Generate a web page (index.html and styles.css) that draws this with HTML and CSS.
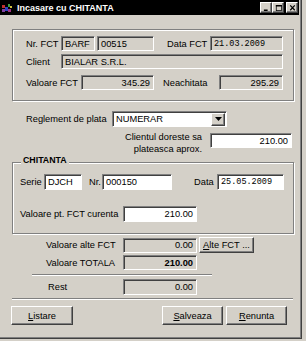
FILE: index.html
```html
<!DOCTYPE html>
<html>
<head>
<meta charset="utf-8">
<link rel="stylesheet" href="styles.css">
</head>
<body>
<div class="win">
  <div class="titlebar">
    <svg class="appicon" width="11" height="10" viewBox="0 0 11 10">
      <rect x="0" y="2" width="3" height="3" fill="#c03030"/>
      <rect x="3" y="4" width="3" height="4" fill="#3040c0"/>
      <rect x="0" y="6" width="3" height="3" fill="#8040a0"/>
      <rect x="6" y="1" width="2" height="3" fill="#40a040"/>
      <rect x="8" y="3" width="2" height="2" fill="#d0c040"/>
      <rect x="6" y="6" width="3" height="3" fill="#a03080"/>
    </svg>
    <span class="title">Incasare cu CHITANTA</span>
    <div class="ctrls">
      <span class="cb"><svg width="9" height="8" viewBox="0 0 9 8"><rect x="1" y="6" width="5" height="2" fill="#000"/></svg></span>
      <span class="cb"><svg width="9" height="8" viewBox="0 0 9 8"><rect x="1.5" y="0.5" width="7" height="7" fill="none" stroke="#000"/><rect x="1" y="0" width="8" height="2" fill="#000"/></svg></span>
      <span class="cb cb-close"><svg width="9" height="8" viewBox="0 0 9 8"><path d="M1.5 0.5 L7.5 7 M7.5 0.5 L1.5 7" stroke="#000" stroke-width="1.6"/></svg></span>
    </div>
  </div>
  <div class="content">
    <div class="grp grp-fct">
      <div class="row row1">
        <span class="lbl l-nr">Nr. FCT</span>
        <span class="fld f-serie">BARF</span>
        <span class="fld f-nr">00515</span>
        <span class="lbl l-data">Data FCT</span>
        <span class="fld f-data mono">21.03.2009</span>
      </div>
      <div class="row row2">
        <span class="lbl l-nr">Client</span>
        <span class="fld f-client">BIALAR S.R.L.</span>
      </div>
      <div class="row row3">
        <span class="lbl l-val">Valoare FCT</span>
        <span class="fld r f-val">345.29</span>
        <span class="lbl l-neach">Neachitata</span>
        <span class="fld r f-neach">295.29</span>
      </div>
    </div>

    <div class="row row-regl">
      <span class="lbl l-regl">Reglement de plata</span>
      <div class="select">
        <span class="sel-text">NUMERAR</span>
        <span class="sel-btn"><svg width="7" height="4" viewBox="0 0 7 4"><path d="M0 0 H7 L3.5 4 Z" fill="#000"/></svg></span>
      </div>
    </div>

    <div class="row row-aprox">
      <span class="lbl-aprox">Clientul doreste sa<br>plateasca aprox.</span>
      <span class="fld white r f-aprox">210.00</span>
    </div>

    <div class="grp grp-chit">
      <span class="grp-title">CHITANTA</span>
      <div class="row row-serie">
        <span class="lbl l-serie">Serie</span>
        <span class="fld white f-dj">DJCH</span>
        <span class="lbl l-nr2">Nr.</span>
        <span class="fld white f-nr2">000150</span>
        <span class="lbl l-data2">Data</span>
        <span class="fld white mono f-data2">25.05.2009</span>
      </div>
      <div class="row row-vpt">
        <span class="lbl l-vpt">Valoare pt. FCT curenta</span>
        <span class="fld white r f-sum">210.00</span>
      </div>
    </div>

    <div class="row row-alte">
      <span class="lbl-sum">Valoare alte FCT</span>
      <span class="fld r f-sum">0.00</span>
      <span class="btn btn-alte"><u>A</u>lte FCT ...</span>
    </div>
    <div class="row row-tot">
      <span class="lbl-sum">Valoare TOTALA</span>
      <span class="fld r f-sum bold">210.00</span>
    </div>
    <div class="sep sep-short"></div>
    <div class="row row-rest">
      <span class="lbl-sum l-rest">Rest</span>
      <span class="fld r f-sum">0.00</span>
    </div>
    <div class="sep sep-full"></div>
    <div class="row row-btns">
      <span class="btn btn-listare"><u>L</u>istare</span>
      <span class="btn btn-salv"><u>S</u>alveaza</span>
      <span class="btn btn-ren"><u>R</u>enunta</span>
    </div>
  </div>
</div>
</body>
</html>
```

FILE: styles.css
```css
html, body {
  margin: 0;
  padding: 0;
}
body {
  background: #d4d0c8;
  font-family: "Liberation Sans", Arial, sans-serif;
  font-size: 9.3px;
  color: #000;
}
.win {
  width: 301px;
  height: 338px;
  background: #d4d0c8;
  border-right: 1px solid #404040;
  border-bottom: 1px solid #404040;
  box-shadow: inset -1px -1px 0 #808080;
  position: relative;
}
.titlebar {
  height: 15px;
  margin-right: 2px;
  background: #000;
  color: #fff;
  display: flex;
  align-items: center;
  font-weight: bold;
  font-size: 9px;
}
.appicon {
  margin-left: 2px;
  flex: none;
}
.title {
  margin-left: 4px;
  white-space: nowrap;
}
.ctrls {
  margin-left: auto;
  margin-right: 1px;
  display: flex;
}
.cb {
  width: 12px;
  height: 11px;
  box-sizing: border-box;
  background: #d4d0c8;
  border-top: 1px solid #fff;
  border-left: 1px solid #fff;
  border-right: 1px solid #404040;
  border-bottom: 1px solid #404040;
  box-shadow: inset -1px -1px 0 #808080;
  display: flex;
  align-items: center;
  justify-content: center;
}
.cb svg { width: 7px; height: 6px; }
.cb-close { margin-left: 2px; }

.content {
  padding-left: 12px;
}
.grp {
  position: relative;
  box-sizing: border-box;
  border: 1px solid #808080;
  box-shadow: 1px 1px 0 #fff, inset 1px 1px 0 #fff;
}
.grp-fct {
  margin-top: 14px;
  width: 282px;
  height: 72px;
  padding: 6px 0 0 13px;
}
.row {
  display: flex;
  align-items: center;
}
.lbl {
  white-space: nowrap;
  flex: none;
}
.fld {
  flex: none;
  box-sizing: border-box;
  height: 15px;
  display: flex;
  align-items: center;
  padding: 0 3px;
  white-space: nowrap;
  overflow: hidden;
  border: 1px solid;
  border-color: #808080 #fff #fff #808080;
  box-shadow: inset 1px 1px 0 #404040;
  background: #d4d0c8;
}
.fld.white { background: #fff; }
.fld.r { justify-content: flex-end; }
.mono {
  font-family: "Liberation Mono", "DejaVu Sans Mono", monospace;
  font-size: 8.5px;
}
.bold { font-weight: bold; }

.row1 { height: 15px; }
.row2 { height: 15px; margin-top: 3px; }
.row3 { height: 15px; margin-top: 6px; }
.l-nr { width: 35px; }
.f-serie { width: 34px; }
.f-nr { width: 57px; margin-left: 2px; }
.l-data { margin-left: 13px; width: 43px; }
.f-data { width: 73px; }
.f-client { width: 222px; }
.l-val { width: 55px; }
.f-val { width: 73px; }
.l-neach { margin-left: 9px; width: 56px; }
.f-neach { width: 64px; }

.row-regl { margin-top: 10px; height: 16px; }
.l-regl { margin-left: 14px; width: 86px; }
.select {
  width: 115px;
  height: 16px;
  box-sizing: border-box;
  border: 1px solid;
  border-color: #808080 #fff #fff #808080;
  box-shadow: inset 1px 1px 0 #404040;
  background: #fff;
  display: flex;
  align-items: center;
  padding: 1px 1px 1px 3px;
}
.sel-text { flex: 1; }
.sel-btn {
  width: 14px;
  height: 13px;
  box-sizing: border-box;
  background: #d4d0c8;
  border-top: 1px solid #fff;
  border-left: 1px solid #fff;
  border-right: 1px solid #404040;
  border-bottom: 1px solid #404040;
  box-shadow: inset -1px -1px 0 #808080;
  display: flex;
  align-items: center;
  justify-content: center;
}

.row-aprox {
  margin-top: 4px;
  height: 24px;
  align-items: flex-start;
}
.lbl-aprox {
  width: 190px;
  text-align: right;
  line-height: 12px;
}
.f-aprox {
  width: 82px;
  margin-left: 8px;
  margin-top: 2px;
}

.grp-chit {
  margin-top: 7px;
  width: 282px;
  height: 72px;
  padding: 11px 0 0 7px;
}
.grp-title {
  position: absolute;
  left: 8px;
  top: -8px;
  padding: 0 2px;
  background: #d4d0c8;
  font-weight: bold;
  font-size: 8.8px;
  line-height: 11px;
}
.row-serie { height: 16px; }
.row-serie .fld { height: 16px; }
.l-serie { width: 24px; }
.f-dj { width: 38px; }
.l-nr2 { margin-left: 7px; width: 13px; }
.f-nr2 { width: 70px; }
.l-data2 { margin-left: 22px; width: 23px; }
.f-data2 { width: 67px; }
.row-vpt { margin-top: 16px; height: 16px; }
.row-vpt .fld { height: 16px; }
.l-vpt { width: 103px; }
.f-sum { width: 74px; }

.lbl-sum {
  width: 111px;
  box-sizing: border-box;
  padding-left: 34px;
  white-space: nowrap;
}
.l-rest { padding-left: 36px; }
.row-alte { margin-top: 3px; height: 16px; }
.row-tot { margin-top: 2px; height: 15px; }
.row-rest { margin-top: 3px; height: 16px; }
.row-rest .fld { height: 16px; }

.sep {
  height: 0;
  border-top: 1px solid #808080;
  border-bottom: 1px solid #fff;
}
.sep-short { margin: 4px 0 0 20px; width: 180px; }
.sep-full { margin-top: 3px; width: 281px; }

.btn {
  flex: none;
  box-sizing: border-box;
  display: flex;
  align-items: center;
  justify-content: center;
  white-space: nowrap;
  background: #d4d0c8;
  border-top: 1px solid #fff;
  border-left: 1px solid #fff;
  border-right: 1px solid #404040;
  border-bottom: 1px solid #404040;
  box-shadow: inset -1px -1px 0 #808080;
}
.btn-alte { width: 55px; height: 16px; margin-left: 2px; }
.row-btns { margin-top: 6px; height: 19px; }
.row-btns .btn { height: 19px; }
.btn-listare { width: 62px; margin-left: -1px; }
.btn-salv { width: 61px; margin-left: 89px; }
.btn-ren { width: 61px; margin-left: 3px; }
```
